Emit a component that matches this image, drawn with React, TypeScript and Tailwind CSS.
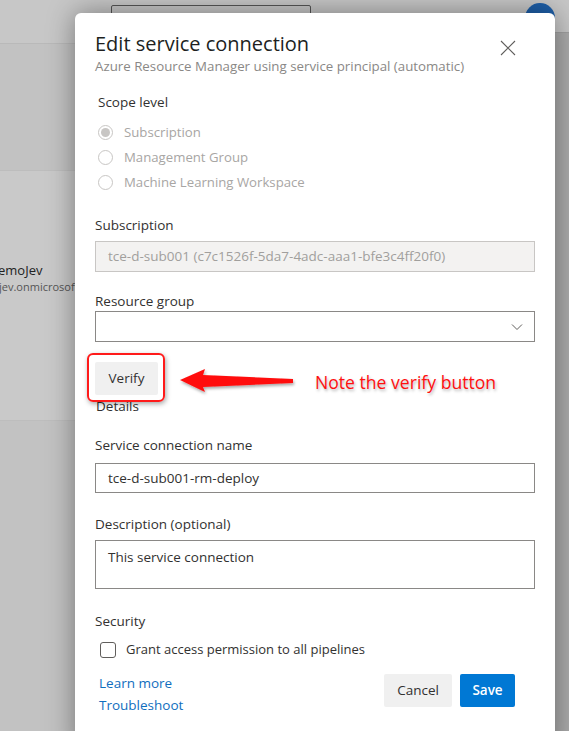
import React from "react";

const FONT = { fontFamily: '"Open Sans", "Noto Sans", Arial, sans-serif' };

function Radio({ label, checked }: { label: string; checked?: boolean }) {
  return (
    <div className="flex items-center h-[25px] pl-[3px]">
      <span className="w-[15px] h-[15px] rounded-full border border-[#c8c6c4] flex items-center justify-center">
        {checked && <span className="w-[9px] h-[9px] rounded-full bg-[#c8c6c4]" />}
      </span>
      <span className="ml-[11px] text-[13.2px] text-[#a8a6a4]">{label}</span>
    </div>
  );
}

function Label({ children, className = "" }: { children: React.ReactNode; className?: string }) {
  return <div className={`h-[20px] leading-[20px] text-[13.5px] text-[#323130] ${className}`}>{children}</div>;
}

function Backdrop() {
  // página de atrás, escurecida pelo overlay
  return (
    <div className="absolute inset-0 bg-[#c2c2c2]">
      <div className="h-[44px] bg-[#c7c7c7] border-b border-[#b9b9b9] relative">
        <div className="absolute left-[111px] top-[5px] w-[200px] h-[30px] border border-[#555] rounded-[2px]" />
        <div className="absolute left-[525px] top-[3px] w-[30px] h-[30px] rounded-full bg-[#1e5fa8]" />
      </div>
      <div className="mt-[126px] h-[251px] w-[80px] bg-[#c9c9c9] border-y border-[#bdbdbd] pt-[90px] overflow-hidden">
        <div className="text-[13px] text-[#222] -ml-[2px] leading-[18px] whitespace-nowrap">emoJev</div>
        <div className="text-[11px] text-[#555] -ml-[1px] leading-[16px] whitespace-nowrap">jev.onmicrosoft.com</div>
      </div>
      <div className="absolute right-0 top-[32px] bottom-0 w-[14px] bg-[#ababab] border-t border-[#a0a0a0]" />
    </div>
  );
}

function Annotation() {
  return (
    <>
      <div className="absolute left-[87px] top-[353px] w-[78px] h-[49px] rounded-[6px] border-2 border-[#ff1a1a] shadow-[1px_2px_5px_rgba(0,0,0,0.35)]" />
      <svg className="absolute left-[176px] top-[364px]" width="124" height="34" viewBox="0 0 124 34">
        <defs>
          <filter id="sh" x="-10%" y="-30%" width="130%" height="170%">
            <feDropShadow dx="1" dy="2" stdDeviation="1.5" floodColor="#000" floodOpacity="0.35" />
          </filter>
        </defs>
        <polygon points="4,16 29,5 27,11 117,15 117,19 27,23 29,28" fill="#ff0d0d" filter="url(#sh)" />
      </svg>
      <div className="absolute left-[315px] top-[370px] text-[17.6px] leading-[24px] text-[#ff1010] whitespace-nowrap [text-shadow:1px_2px_3px_rgba(0,0,0,0.3)]">
        Note the verify button
      </div>
    </>
  );
}

function Modal() {
  return (
    <div className="absolute left-[75px] top-[13px] w-[480px] h-[740px] bg-white rounded-t-[6px] shadow-[0_0_28px_rgba(0,0,0,0.4)] pl-[20px] pr-[20px] pt-[18px]">
      <button className="absolute right-[39px] top-[27px] w-[16px] h-[16px]">
        <svg width="16" height="16" viewBox="0 0 16 16" fill="none" stroke="#605e5c" strokeWidth="1.1">
          <path d="M1 1L15 15M15 1L1 15" />
        </svg>
      </button>
      <div className="h-[26px] leading-[26px] text-[20px] text-[#201f1e]">Edit service connection</div>
      <div className="h-[18px] leading-[18px] text-[13.3px] text-[#8a8886] whitespace-nowrap">
        Azure Resource Manager using service principal (automatic)
      </div>

      <Label className="mt-[17px] pl-[3px]">Scope level</Label>
      <div className="mt-[8px]">
        <Radio label="Subscription" checked />
        <Radio label="Management Group" />
        <Radio label="Machine Learning Workspace" />
      </div>

      <Label className="mt-[20px]">Subscription</Label>
      <div className="mt-[6px] h-[31px] border border-[#c8c6c4] bg-[#f3f2f1] flex items-center px-[12px] text-[13.5px] text-[#a19f9d] whitespace-nowrap">
        tce-d-sub001 (c7c1526f-5da7-4adc-aaa1-bfe3c4ff20f0)
      </div>

      <Label className="mt-[19px]">Resource group</Label>
      <div className="h-[31px] border border-[#8a8886] flex items-center justify-end pr-[11px]">
        <svg width="12" height="8" viewBox="0 0 12 8" fill="none" stroke="#605e5c" strokeWidth="1">
          <path d="M1 1.5L6 6.5L11 1.5" />
        </svg>
      </div>

      <button className="mt-[20px] h-[33px] w-[63px] bg-[#f0f0f0] text-[13.5px] text-[#323130] rounded-[2px] block">
        Verify
      </button>
      <Label className="pl-[1px] mt-[1px]">Details</Label>

      <Label className="mt-[19px]">Service connection name</Label>
      <div className="mt-[8px] h-[30px] border border-[#8a8886] flex items-center px-[12px] text-[13.5px] text-[#323130]">
        tce-d-sub001-rm-deploy
      </div>

      <Label className="mt-[21px]">Description (optional)</Label>
      <div className="mt-[6px] h-[49px] border border-[#8a8886] px-[12px] pt-[6px] text-[13.5px] leading-[20px] text-[#323130]">
        This service connection
      </div>

      <Label className="mt-[22px]">Security</Label>
      <div className="mt-[7px] h-[24px] flex items-center pl-[5px]">
        <span className="w-[16px] h-[16px] rounded-[3px] border border-[#605e5c]" />
        <span className="ml-[10px] text-[13px] text-[#323130]">Grant access permission to all pipelines</span>
      </div>

      <div className="mt-[10px] flex justify-between pr-[20px]">
        <div className="pl-[4px] text-[13.5px] leading-[22px] text-[#106ebe]">
          <div>Learn more</div>
          <div>Troubleshoot</div>
        </div>
        <div className="flex gap-[8px] mt-[2px]">
          <button className="h-[33px] w-[68px] bg-[#f0f0f0] rounded-[2px] text-[13.5px] text-[#323130]">Cancel</button>
          <button className="h-[33px] w-[55px] bg-[#0078d4] rounded-[2px] text-[13.5px] font-semibold text-white">Save</button>
        </div>
      </div>
    </div>
  );
}

export default function App() {
  return (
    <div className="relative w-[569px] h-[731px] overflow-hidden" style={FONT}>
      <Backdrop />
      <Modal />
      <Annotation />
    </div>
  );
}
